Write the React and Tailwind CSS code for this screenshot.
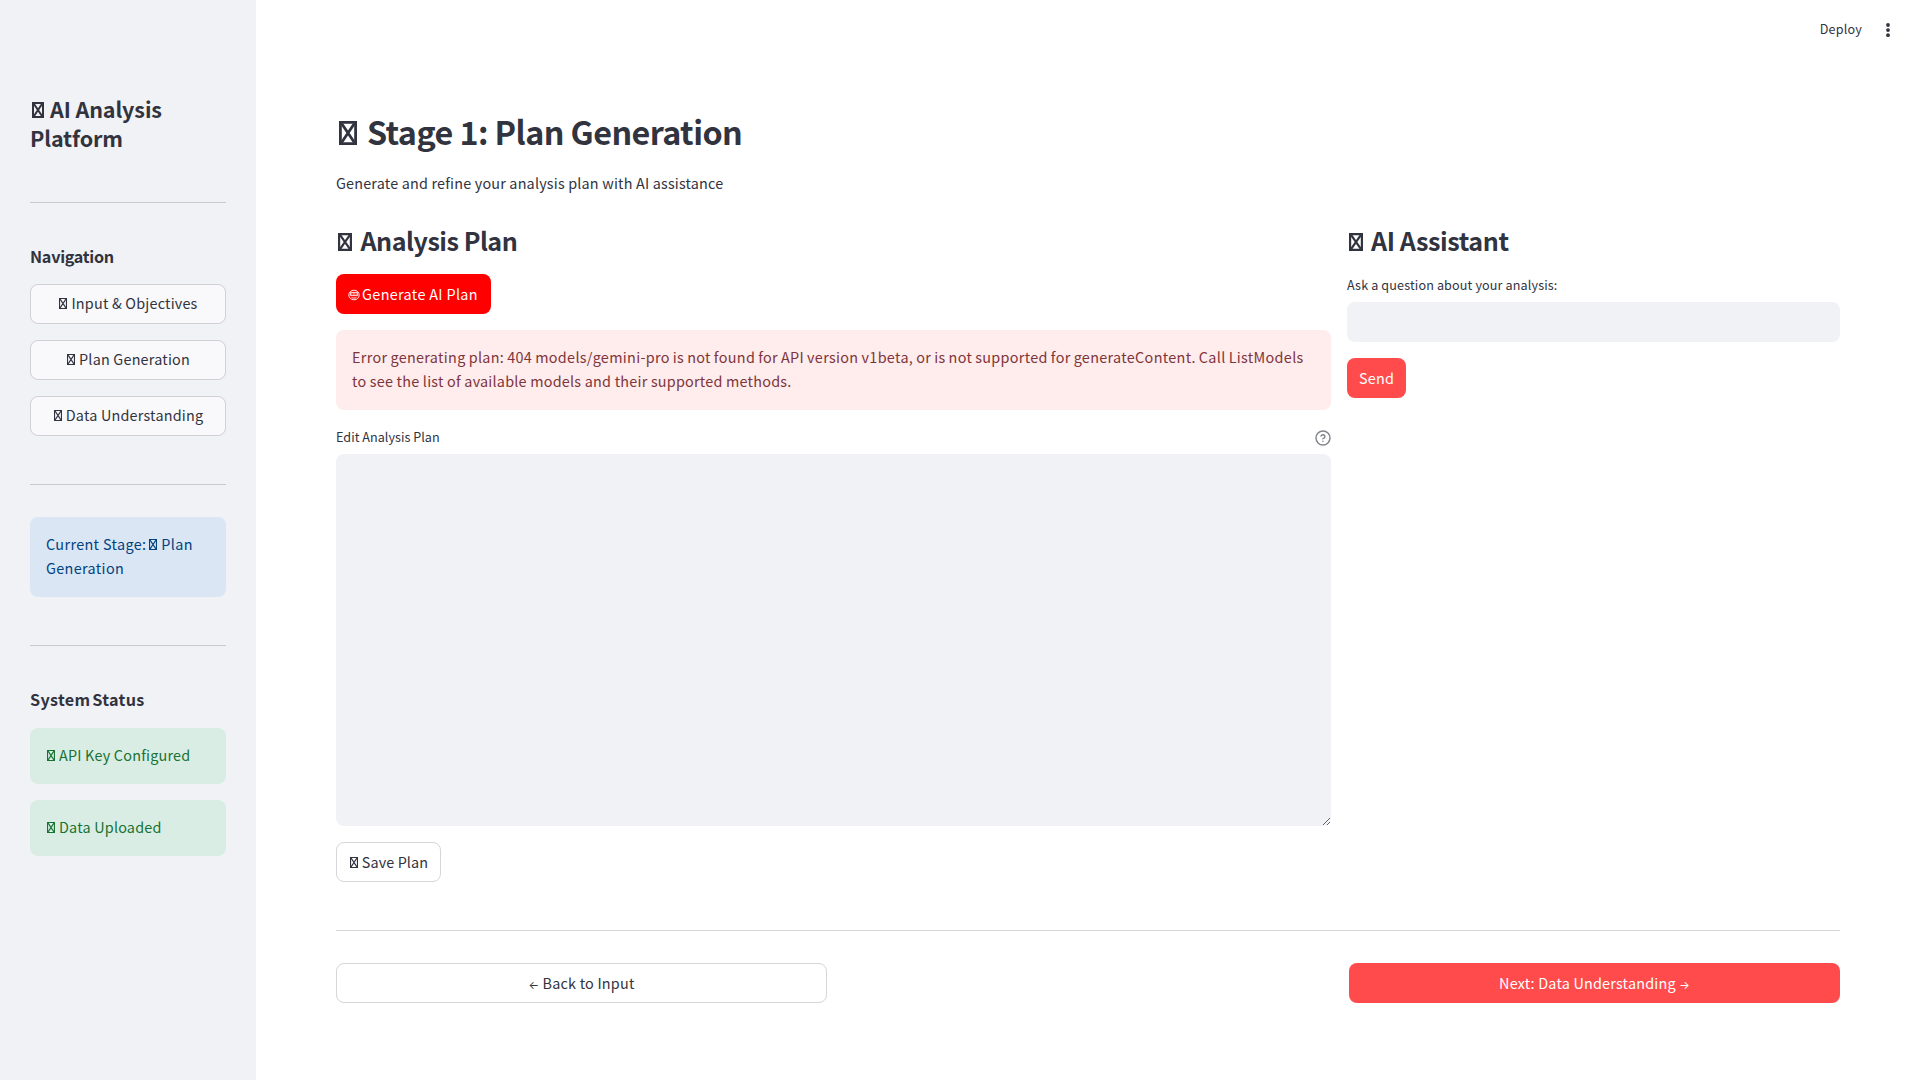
function Glyph({ className = "", weight = 1, w = 8, h = 11 }) {
  const i = weight / 2;
  return (
    <svg width={w} height={h} viewBox={`0 0 ${w} ${h}`} className={"inline-block " + className} fill="none" stroke="currentColor" strokeWidth={weight} aria-hidden="true">
      <path d={`M${i} ${i}H${w - i}V${h - i}H${i}Z`} />
      <path d={`M${weight} ${weight}L${w - weight} ${h - weight}M${w - weight} ${weight}L${weight} ${h - weight}`} />
    </svg>
  );
}

function SmallGlyph() {
  return <Glyph className="ml-px mr-[4px] align-[0px]" weight={1.1} />;
}

function Face() {
  return (
    <svg viewBox="0 0 12 12" className="-ml-px mr-[2px] inline-block h-3 w-3 align-[-1px]" fill="none" stroke="currentColor" aria-hidden="true">
      <ellipse cx="6" cy="6" rx="5.2" ry="4.8" strokeWidth="0.9" />
      <path d="M2.4 3.4h7.2v3.2H2.4z" fill="currentColor" fillOpacity="0.45" strokeWidth="0.8" />
      <path d="M3.8 5h1.2M7 5h1.2" stroke="#ff0000" strokeWidth="1" />
      <path d="M3.6 8.4c1.5 1 3.3 1 4.8 0" strokeWidth="0.9" />
    </svg>
  );
}

function NavButton({ children }) {
  return (
    <button className="flex h-10 w-full items-center justify-center rounded-lg border border-[#d0d1d6] bg-[#f9f9fb] pb-[3px]">
      <span className="whitespace-nowrap"><SmallGlyph />{children}</span>
    </button>
  );
}

function Status({ children }) {
  return (
    <div className="h-14 rounded-lg bg-[#daede5] px-4 pt-[15px] text-[#177233]">
      <SmallGlyph />{children}
    </div>
  );
}

export default function App() {
  return (
    <div className="flex h-[1080px] w-[1920px] overflow-hidden bg-white font-['Noto_Sans_CJK_SC',sans-serif] text-[14.4px] leading-6 tracking-[0.2px] text-[#31333f]">
      <aside className="flex w-64 shrink-0 flex-col bg-[#f0f2f6] px-[30px] pt-[94px]">
        <h2 className="h-[60px] text-[21.5px] font-semibold leading-[29px] tracking-[-0.1px]">
          <Glyph className="ml-[2px] mr-[6px] align-[0px]" weight={2} w={12} h={16} />AI Analysis<br />Platform
        </h2>
        <hr className="mt-12 border-[#c8cad0]" />
        <h3 className="mt-[41px] h-6 text-[16.2px] font-semibold tracking-[-0.28px]">Navigation</h3>
        <div className="mt-4 flex flex-col gap-4">
          <NavButton>Input &amp; Objectives</NavButton>
          <NavButton>Plan Generation</NavButton>
          <NavButton>Data Understanding</NavButton>
        </div>
        <hr className="mt-12 border-[#c8cad0]" />
        <div className="mt-8 h-20 rounded-lg bg-[#dae6f4] px-4 pt-[15px] tracking-[0.35px] text-[#004280]">
          Current Stage:<Glyph className="ml-[3px] mr-[4px] align-[0px]" weight={1.1} />Plan<br />Generation
        </div>
        <hr className="mt-12 border-[#c8cad0]" />
        <h3 className="mt-[41px] h-6 text-[16.2px] font-semibold tracking-[0.3px] [word-spacing:-2px]">System Status</h3>
        <div className="mt-[17px] flex flex-col gap-4">
          <Status>API Key Configured</Status>
          <Status>Data Uploaded</Status>
        </div>
      </aside>

      <main className="flex grow flex-col px-20">
        <header className="-mr-14 flex h-[60px] items-center justify-end gap-[18px] text-[12.6px]">
          <span className="pb-[2px]">Deploy</span>
          <svg viewBox="0 0 16 16" className="h-4 w-4" fill="currentColor">
            <circle cx="8" cy="3" r="1.9" /><circle cx="8" cy="8.1" r="1.9" /><circle cx="8" cy="13.2" r="1.9" />
          </svg>
        </header>
        <h1 className="mt-[46px] h-[50px] text-[32.3px] font-semibold leading-[50px] tracking-[-0.57px]">
          <Glyph className="ml-[3px] mr-[10px] align-[0px]" weight={2.8} w={18} h={24} />Stage 1: Plan Generation
        </h1>
        <p className="mt-[15px] h-6 tracking-[0.18px]">Generate and refine your analysis plan with AI assistance</p>

        <div className="mt-[27px] flex gap-4">
          <section className="flex w-[995px] flex-col items-start">
            <h2 className="h-9 text-[25.1px] font-semibold leading-9 tracking-[-0.48px]">
              <Glyph className="ml-[2px] mr-[8.5px] align-[0px]" weight={2.2} w={14} h={18} />Analysis Plan
            </h2>
            <button className="mt-4 h-10 w-[155px] whitespace-nowrap rounded-lg bg-[#ff0000] pb-px tracking-[0.34px] text-white"><Face />Generate AI Plan</button>
            <div className="mt-4 h-20 w-full whitespace-nowrap rounded-lg bg-[#ffecec] px-4 pt-[15px] text-[#7d353b]">
              <span className="tracking-[0.32px] [word-spacing:-0.5px]">Error generating plan: 404 models/gemini-pro is not found for API version v1beta, or is not supported for generateContent. Call ListModels</span><br />
              <span className="tracking-[0.22px]">to see the list of available models and their supported methods.</span>
            </div>
            <div className="mt-[15px] flex h-[29px] w-full items-start justify-between text-[12.6px] tracking-[0.03px]">
              <span>Edit Analysis Plan</span>
              <svg viewBox="0 0 24 24" className="mt-[5px] h-4 w-4" fill="none" stroke="#83858d" strokeWidth="2.2" strokeLinecap="round" strokeLinejoin="round">
                <circle cx="12" cy="12" r="10.5" /><path d="M9.1 9a3 3 0 0 1 5.8 1c0 2-2.9 3-2.9 3M12 17h.01" />
              </svg>
            </div>
            <textarea className="block h-[372px] w-full resize-y rounded-lg bg-[#f0f2f6]" />
            <button className="mt-4 h-10 w-[105px] whitespace-nowrap rounded-lg border border-[#d6d6d9] pb-px tracking-[0.1px]"><SmallGlyph />Save Plan</button>
          </section>
          <section className="flex w-[493px] flex-col items-start">
            <h2 className="h-9 text-[25.1px] font-semibold leading-9 tracking-[-0.4px]">
              <Glyph className="ml-[2px] mr-[8px] align-[0px]" weight={2.2} w={14} h={18} />AI Assistant
            </h2>
            <label className="mt-[15px] h-[29px] text-[12.6px] tracking-[0.13px]">Ask a question about your analysis:</label>
            <input className="h-10 w-full rounded-lg bg-[#f0f2f6]" />
            <button className="mt-4 h-10 w-[59px] rounded-lg bg-[#ff4b4b] pb-px text-white">Send</button>
          </section>
        </div>

        <hr className="mt-12 border-[#d6d6d9]" />
        <div className="mt-8 flex justify-between">
          <button className="h-10 w-[491px] rounded-lg border border-[#d6d6d9] pb-px"><span className="font-['Inter'] text-[11px] leading-none">←</span> Back to Input</button>
          <button className="h-10 w-[491px] rounded-lg bg-[#ff4b4b] pb-px text-white">Next: Data Understanding <span className="font-['Inter'] text-[11px] leading-none">→</span></button>
        </div>
      </main>
    </div>
  );
}
